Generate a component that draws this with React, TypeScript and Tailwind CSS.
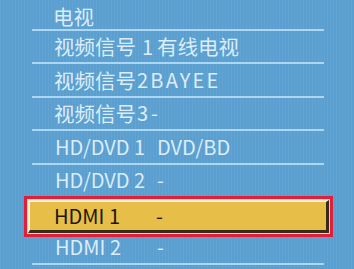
const rows: { a: string; b?: string }[] = [
  { a: "HD/DVD 1", b: "DVD/BD" },
  { a: "HD/DVD 2", b: "-" },
];

const font = { fontFamily: '"Noto Sans CJK SC", "Noto Sans", sans-serif' };

const Zh = ({ children }: { children: React.ReactNode }) => (
  <span className="text-[20.5px]">{children}</span>
);

const App = () => {
  return (
    <div
      className="h-[269px] w-[354px] overflow-hidden bg-[#5a9fd0] bg-[repeating-linear-gradient(90deg,rgba(255,255,255,0.05)_0px,rgba(255,255,255,0.05)_1px,transparent_1px,transparent_3px)] text-[20px] leading-none text-[#dcedf9]"
      style={font}
    >
      <div className="ml-[32px] flex w-[292px] flex-col">
        <div className="flex h-[31px] items-center border-b-2 border-[#acd7f2] pl-[21px] pt-[4px]">
          <Zh>电视</Zh>
        </div>
        <div className="flex h-[33.4px] items-center border-b-2 border-[#acd7f2] pl-[22px]">
          <Zh>视频信号</Zh>
          <span className="ml-[6px] mr-[4px]">1</span>
          <Zh>有线电视</Zh>
        </div>
        <div className="flex h-[33.4px] items-center border-b-2 border-[#acd7f2] pl-[22px]">
          <Zh>视频信号</Zh>
          <span className="ml-[1px] tracking-[2.2px]">2BAYEE</span>
        </div>
        <div className="flex h-[33.4px] items-center border-b-2 border-[#acd7f2] pl-[22px]">
          <Zh>视频信号</Zh>
          <span className="ml-[1px] tracking-[3px]">3-</span>
        </div>
        {rows.map((r) => (
          <div key={r.a} className="flex h-[33.4px] items-center border-b-2 border-[#acd7f2] pl-[23px]">
            <span className="w-[102px]">{r.a}</span>
            <span>{r.b}</span>
          </div>
        ))}
        <div className="relative z-10 -mx-[8px] mt-[-2px] mb-[-5.6px] h-[41px] w-[309px] border-[3px] border-[#e11f3b] bg-[#b4e2f8] p-[1px]">
          <div className="flex h-full items-center border-t-2 border-l-2 border-r-[3px] border-b-[3px] border-t-[#fbf3d6] border-l-[#fbf3d6] border-r-[#3a2b17] border-b-[#3a2b17] bg-[#e6be48] pl-[24px] text-[#1c1710]">
            <span className="w-[102px]">HDMI 1</span>
            <span>-</span>
          </div>
        </div>
        <div className="flex h-[33.4px] items-center border-b-2 border-[#acd7f2] pl-[23px]">
          <span className="w-[102px]">HDMI 2</span>
          <span>-</span>
        </div>
      </div>
    </div>
  );
};

export default App;
